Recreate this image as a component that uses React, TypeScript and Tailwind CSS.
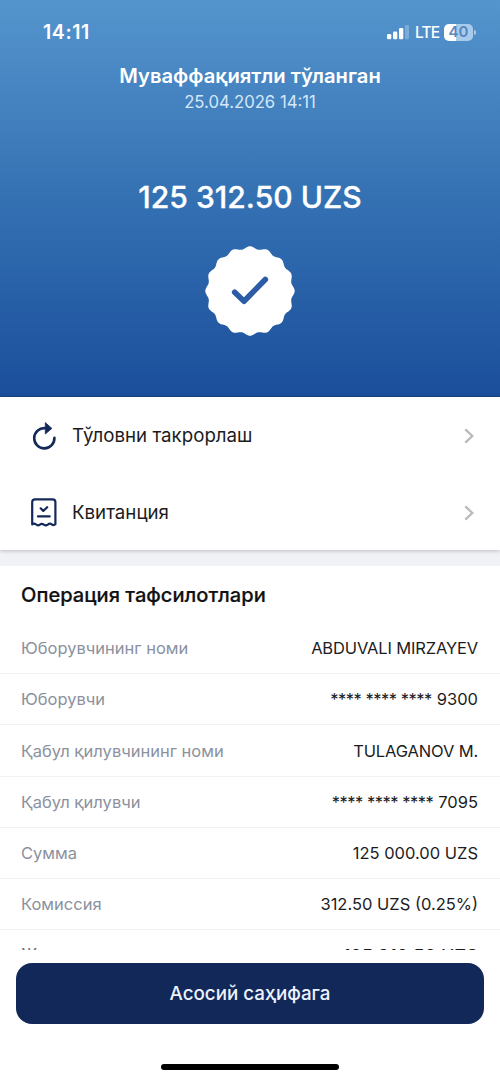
import React from 'react';

type Detail = { label: string; mask?: string; value: string; tracking?: string };

const details: Detail[] = [
  { label: 'Юборувчининг номи', value: 'ABDUVALI MIRZAYEV', tracking: 'tracking-[-0.15px]' },
  { label: 'Юборувчи', mask: '**** **** ****', value: '9300' },
  { label: 'Қабул қилувчининг номи', value: 'TULAGANOV M.', tracking: 'tracking-[-0.15px]' },
  { label: 'Қабул қилувчи', mask: '**** **** ****', value: '7095' },
  { label: 'Сумма', value: '125 000.00 UZS' },
  { label: 'Комиссия', value: '312.50 UZS (0.25%)' },
];

function sealPath(): string {
  const points: string[] = [];
  for (let i = 0; i <= 360; i += 1) {
    const a = (i * Math.PI) / 180;
    const r = 43.4 + 1.3 * Math.cos(16 * a);
    points.push(`${(45 + r * Math.sin(a)).toFixed(2)} ${(45 - r * Math.cos(a)).toFixed(2)}`);
  }
  return `M${points.join('L')}Z`;
}

function Seal() {
  return (
    <svg className="mt-[29px] h-[90px] w-[90px] shrink-0" viewBox="0 0 90 90">
      <path d={sealPath()} fill="#fff" />
      <path d="M29.7 46.3L39 55.3L60.3 33.5" fill="none" stroke="#2b5ca5" strokeWidth="5.600" strokeLinecap="round" strokeLinejoin="round" />
    </svg>
  );
}

function StatusBar() {
  return (
    <div className="flex h-[64px] w-full shrink-0 items-center justify-between pr-[24px] pl-[43px]">
      <span className="pt-[2px] text-[19.500px] font-semibold tracking-[0.6px]">14:11</span>
      <div className="flex items-center">
        <svg className="h-4 w-[22px]" viewBox="0 0 22 16" fill="#fff">
          <rect x="0" y="10" width="4.300" height="5.300" rx="1.200" />
          <rect x="6" y="7.500" width="4.300" height="7.800" rx="1.200" />
          <rect x="12" y="4" width="4.300" height="11.300" rx="1.200" />
          <rect x="18" y="1" width="4" height="14.300" rx="1.200" opacity=".25" />
        </svg>
        <span className="ml-[6px] w-[24px] pt-px text-[15.500px] font-medium tracking-[-0.8px]">LTE</span>
        <div className="ml-[5px] flex h-[17px] w-[29px] items-center justify-center rounded-[5px] bg-linear-to-r from-white from-40% to-[#a9cbeb] to-40% text-[15px] font-semibold text-[#5688bd]">40</div>
        <div className="ml-px h-[5px] w-[2px] rounded-r-full bg-[#a9cbeb]" />
      </div>
    </div>
  );
}

function RepeatIcon() {
  return (
    <svg className="h-[30px] w-[28px]" viewBox="0 0 28 30">
      <path d="M24.400 16.700A10.100 10.100 0 1 1 15 7.200" fill="none" stroke="#14295a" strokeWidth="2.600" strokeLinecap="round" />
      <path d="M15.300 1.600L21.900 7.400L15.300 13Z" fill="#14295a" stroke="#14295a" strokeWidth=".8" strokeLinejoin="round" />
    </svg>
  );
}

function ReceiptIcon() {
  return (
    <svg className="h-[30px] w-[28px]" viewBox="0 0 28 30" fill="none" stroke="#14295a" strokeWidth="2.200" strokeLinecap="round" strokeLinejoin="round">
      <path d="M2.200 26.300V4.100Q2.200 1.400 4.900 1.400H22.700Q25.400 1.400 25.400 4.100V26.300Q23.600 27.900 21.700 26.300Q19.800 25 17.800 26.700Q15.800 28.100 13.800 26.700Q11.800 25 9.800 26.700Q7.800 28.100 5.900 26.300Q4 25 2.200 26.300Z" />
      <path d="M10.700 10.300L13.300 12.900L17.200 9.200M8 18.400H19.700" />
    </svg>
  );
}

function Action({ icon, label }: { icon: React.ReactNode; label: string }) {
  return (
    <button className="flex h-[77px] w-full items-center pr-[26px] pl-[30px] text-left">
      {icon}
      <span className="ml-[14px] flex-1 pt-[2px] text-[18.700px] text-[#1c1c1e]">{label}</span>
      <svg className="h-4 w-[10px]" viewBox="0 0 10 16" fill="none">
        <path d="M1.300 1.300L8.300 8L1.300 14.700" stroke="#b8babd" strokeWidth="2.300" />
      </svg>
    </button>
  );
}

export default function App() {
  return (
    <div className="flex h-[1081px] w-[500px] flex-col overflow-hidden bg-white font-['Inter','Liberation_Sans',sans-serif]">
      <header className="flex h-[397px] shrink-0 flex-col items-center border-b border-[#1b447f] bg-linear-to-b from-[#5595cd] via-[#3471b3] to-[#1b4e9b] text-white">
        <StatusBar />
        <h1 className="text-[20.200px] leading-6 font-semibold">Муваффақиятли тўланган</h1>
        <p className="mt-[4px] text-[16.700px] leading-5 text-[#d4e8fa]">25.04.2026 14:11</p>
        <p className="mt-[65px] text-[30.100px] leading-10 font-medium [-webkit-text-stroke:0.3px_white]">125 312.50 UZS</p>
        <Seal />
      </header>
      <section className="relative z-10 h-[153px] shrink-0 bg-white shadow-[0_1px_4px_rgba(0,0,0,0.22)]">
        <Action icon={<RepeatIcon />} label="Тўловни такрорлаш" />
        <Action icon={<ReceiptIcon />} label="Квитанция" />
      </section>
      <div className="h-[16px] shrink-0 bg-[#f1f2f6]" />
      <section className="h-[384px] shrink-0 overflow-hidden">
        <h2 className="flex h-[57px] items-center pt-[2px] pl-[21px] text-[20.100px] font-medium text-[#111] [-webkit-text-stroke:0.2px_#111]">Операция тафсилотлари</h2>
        <dl>
          {details.map(({ label, mask, value, tracking }) => (
            <div key={label} className="flex h-[51.200px] items-center justify-between border-b border-[#f3f3f4] pt-[1px] pr-[22px] pl-[21px] text-[16.500px]">
              <dt className="text-[#8b919d]">{label}</dt>
              <dd className={`flex gap-[5px] text-[#1c1c1e] ${tracking ?? ''}`}>
                {mask && <span className="tracking-[-0.5px]">{mask}</span>}
                <span>{value}</span>
              </dd>
            </div>
          ))}
          <div className="flex h-[51.200px] items-center justify-between pt-[1px] pr-[22px] pl-[21px] text-[18.200px] font-medium text-[#1c1c1e]">
            <dt className="text-[17px] font-normal text-[#6d727c]">Жами</dt>
            <dd className="pt-px">125 312.50 UZS</dd>
          </div>
        </dl>
      </section>
      <footer className="flex flex-1 flex-col items-center px-[16px] pt-[13px]">
        <button className="h-[61px] w-full rounded-[16px] bg-[#122859] pt-[2px] text-[18.800px] font-medium text-[#edf3ff]">Асосий саҳифага</button>
        <div className="mt-[40px] h-[6px] w-[178px] rounded-full bg-black" />
      </footer>
    </div>
  );
}
